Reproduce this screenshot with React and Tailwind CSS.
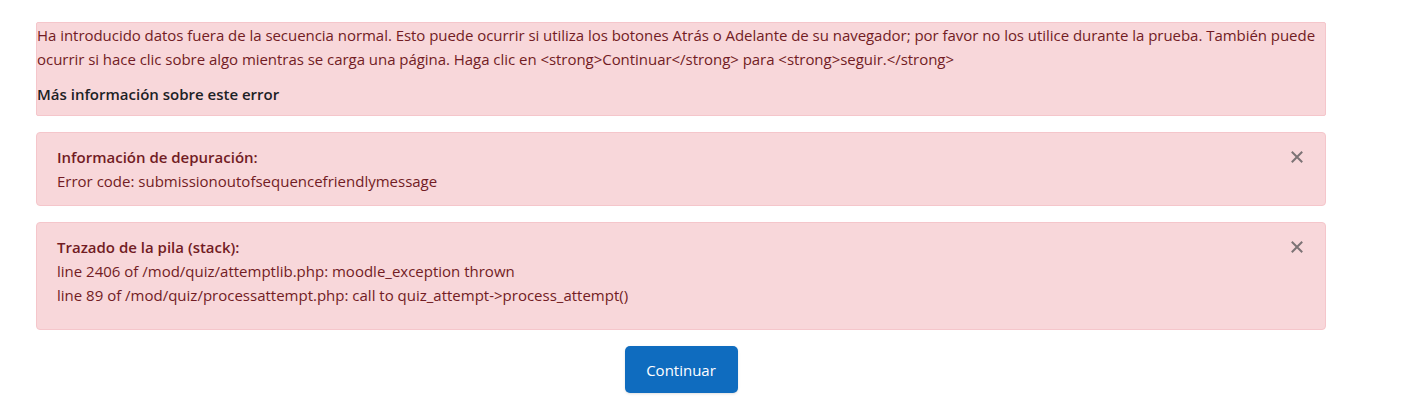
import React from 'react';

const CloseIcon = () => (
  <svg width="12" height="12" viewBox="0 0 12 12" className="text-[#7d7375]">
    <path d="M1.5 1.5 L10.5 10.5 M10.5 1.5 L1.5 10.5" stroke="currentColor" strokeWidth="2" strokeLinecap="square" />
  </svg>
);

const DebugAlert = ({ title, lines, extraBottom }) => (
  <div className="flex justify-between border border-[#f5c6cb] bg-[#f8d7da] text-[#721c24] rounded-[4px] pl-[20px] pr-[22px] py-[12px] mb-[16px]">
    <div className={extraBottom ? 'pb-[10px]' : ''}>
      <div className="font-semibold">{title}</div>
      {lines.map((l, i) => (
        <div key={i}>{l}</div>
      ))}
    </div>
    <button className="h-[24px] w-[12px] flex items-center justify-center" title="Cerrar">
      <CloseIcon />
    </button>
  </div>
);

const App = () => {
  return (
    <div
      className="bg-white min-h-[410px] pt-[22px] pl-[36px] text-[15px] leading-[24px]"
      style={{ fontFamily: '"Open Sans", "Noto Sans", Arial, sans-serif' }}
    >
      <div className="w-[1290px]">
        {/* Main error message */}
        <div className="border border-[#f5c6cb] bg-[#f8d7da] text-[#721c24] rounded-[2px] pt-0 pb-[9px] px-0 mb-[16px]">
          <p className="mb-[11px] tracking-[-0.04px]">
            Ha introducido datos fuera de la secuencia normal. Esto puede ocurrir si utiliza los botones Atrás o Adelante de su navegador; por favor no los utilice durante la prueba. También puede ocurrir si hace clic sobre algo mientras se carga una página. Haga clic en &lt;strong&gt;Continuar&lt;/strong&gt; para &lt;strong&gt;seguir.&lt;/strong&gt;
          </p>
          <p className="font-semibold text-[#1d2125]">Más información sobre este error</p>
        </div>

        <DebugAlert
          title="Información de depuración:"
          lines={['Error code: submissionoutofsequencefriendlymessage']}
        />

        <DebugAlert
          title="Trazado de la pila (stack):"
          lines={[
            'line 2406 of /mod/quiz/attemptlib.php: moodle_exception thrown',
            'line 89 of /mod/quiz/processattempt.php: call to quiz_attempt->process_attempt()',
          ]}
          extraBottom
        />

        <div className="flex justify-center">
          <button className="w-[113px] h-[47px] rounded-[5px] bg-[#0f6cbf] text-white shadow-sm">
            Continuar
          </button>
        </div>
      </div>
    </div>
  );
};

export default App;
